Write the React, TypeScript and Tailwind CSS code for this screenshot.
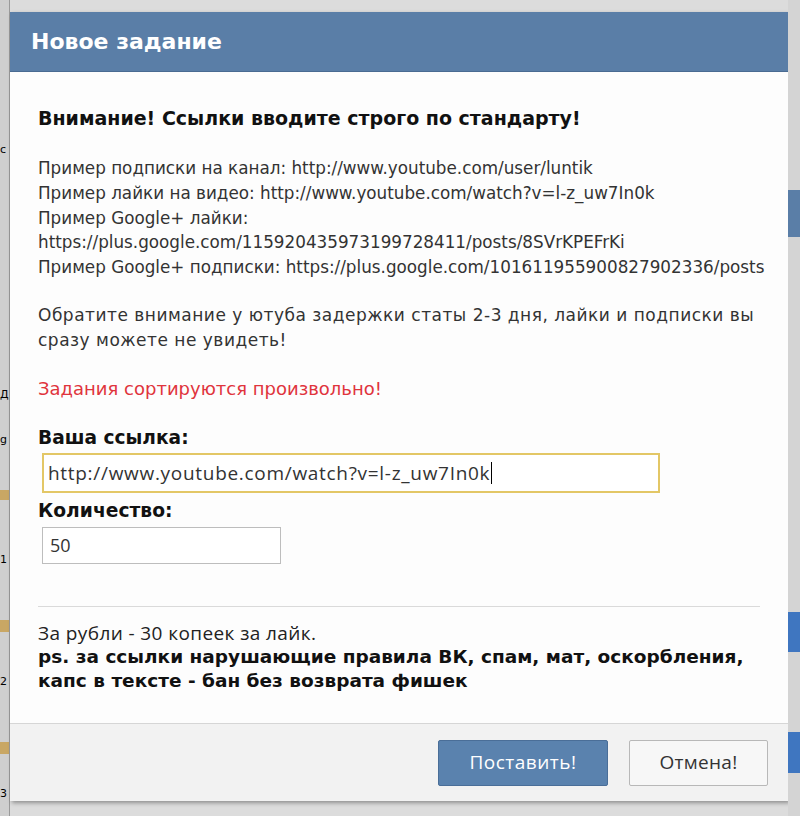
import React from "react";

const dv = { fontFamily: '"DejaVu Sans", Verdana, sans-serif' };
const os = { fontFamily: '"Open Sans", "Noto Sans", sans-serif' };

export default function App() {
  return (
    <div className="w-[800px] h-[816px] bg-[#dcdcdc] flex overflow-hidden" style={dv}>
      {/* left strip */}
      <div className="w-[10px] shrink-0 bg-[#cfcfcf] border-r border-[#9a9a9a] flex flex-col text-[11px] text-black overflow-hidden">
        <div className="h-[140px]" />
        <div className="h-[20px] leading-[20px]">c</div>
        <div className="h-[225px]" />
        <div className="h-[20px] leading-[20px]">Д</div>
        <div className="h-[25px]" />
        <div className="h-[20px] leading-[20px]">g</div>
        <div className="h-[40px]" />
        <div className="h-[10px] bg-[#c9a764]" />
        <div className="h-[50px]" />
        <div className="h-[20px] leading-[20px]">1</div>
        <div className="h-[50px]" />
        <div className="h-[12px] bg-[#c9a764]" />
        <div className="h-[40px]" />
        <div className="h-[20px] leading-[20px]">2</div>
        <div className="h-[50px]" />
        <div className="h-[12px] bg-[#c9a764]" />
        <div className="h-[30px]" />
        <div className="h-[20px] leading-[20px]">3</div>
      </div>

      {/* dialog */}
      <div className="w-[778px] shrink-0 pt-[12px] flex flex-col">
        <div className="h-[789px] flex flex-col bg-white shadow-[2px_2px_4px_rgba(0,0,0,0.35)]">
          {/* header */}
          <div className="h-[60px] shrink-0 bg-[#5a7ea7] border-b border-[#4a6b92] flex items-center pl-[21px]">
            <span className="text-white font-bold text-[22px]" style={dv}>Новое задание</span>
          </div>

          {/* body */}
          <div className="flex-1 flex flex-col pl-[28px] pr-[28px] pt-[33px] bg-[#fdfdfd]">
            <div className="font-bold text-[19px] text-[#111] leading-[26px] whitespace-nowrap">
              Внимание! Ссылки вводите строго по стандарту!
            </div>
            <div className="mt-[25px] text-[16.8px] text-[#333] leading-[24.8px] whitespace-nowrap">
              <div>Пример подписки на канал: http://www.youtube.com/user/luntik</div>
              <div>Пример лайки на видео: http://www.youtube.com/watch?v=l-z_uw7In0k</div>
              <div>Пример Google+ лайки:</div>
              <div>https://plus.google.com/115920435973199728411/posts/8SVrKPEFrKi</div>
              <div>Пример Google+ подписки: https://plus.google.com/101611955900827902336/posts</div>
            </div>
            <div className="mt-[23px] text-[17px] tracking-[0.5px] text-[#333] leading-[25px] whitespace-nowrap">
              <div>Обратите внимание у ютуба задержки статы 2-3 дня, лайки и подписки вы</div>
              <div>сразу можете не увидеть!</div>
            </div>
            <div className="mt-[23px] text-[18px] text-[#e0343c] leading-[25px]">
              Задания сортируются произвольно!
            </div>
            <div className="mt-[24px] font-bold text-[18.6px] text-[#111] leading-[26px]">Ваша ссылка:</div>
            <div className="mt-[2px] ml-[4px] w-[618px] h-[40px] border-2 border-[#e3c766] bg-white flex items-center pl-[4px]">
              <span className="text-[19px] tracking-[0.7px] text-[#333] whitespace-nowrap" style={os}>http://www.youtube.com/watch?v=l-z_uw7In0k</span>
              <span className="w-[1px] h-[22px] bg-black ml-[1px]" />
            </div>
            <div className="mt-[5px] font-bold text-[18.7px] text-[#111] leading-[26px]">Количество:</div>
            <div className="mt-[3px] ml-[4px] w-[239px] h-[37px] border border-[#bdbdbd] bg-white flex items-center pl-[7px]">
              <span className="text-[18px] text-[#333]" style={os}>50</span>
            </div>
            <div className="mt-[42px] h-px bg-[#dadada] w-[722px]" />
            <div className="mt-[14px] text-[19px] tracking-[0.4px] text-[#222] leading-[24px]" style={os}>
              За рубли - 30 копеек за лайк.
            </div>
            <div className="font-bold text-[18.5px] text-[#111] leading-[24px] whitespace-nowrap">
              <div>ps. за ссылки нарушающие правила ВК, спам, мат, оскорбления,</div>
              <div>капс в тексте - бан без возврата фишек</div>
            </div>
          </div>

          {/* footer */}
          <div className="h-[78px] shrink-0 bg-[#f2f2f2] border-t border-[#d6d6d6] flex items-center justify-end pr-[20px] gap-[21px]">
            <button className="w-[170px] h-[46px] bg-[#5a82ae] border border-[#4a6e98] rounded-[2px] text-white text-[19px] tracking-[0.5px]" style={os}>
              Поставить!
            </button>
            <button className="w-[139px] h-[46px] bg-[#f7f7f7] border border-[#b8b8b8] rounded-[2px] text-[#333] text-[19px] tracking-[0.3px]" style={os}>
              Отмена!
            </button>
          </div>
        </div>
      </div>

      {/* right strip */}
      <div className="w-[12px] shrink-0 bg-[#d4d4d4] flex flex-col">
        <div className="h-[190px]" />
        <div className="h-[47px] bg-[#5a7ea7]" />
        <div className="h-[375px]" />
        <div className="h-[40px] bg-[#3f76c0]" />
        <div className="h-[80px]" />
        <div className="h-[41px] bg-[#3f76c0]" />
      </div>
    </div>
  );
}
